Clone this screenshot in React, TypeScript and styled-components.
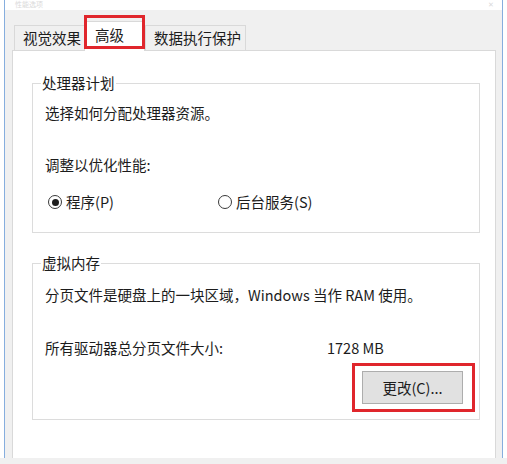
import React from "react";
import styled, { createGlobalStyle } from "styled-components";

const GlobalStyle = createGlobalStyle`
  html, body { margin: 0; padding: 0; background: #ffffff; }
  body {
    font-family: "Noto Sans CJK SC", "Microsoft YaHei", "Liberation Sans", sans-serif;
    color: #1c1c1c;
  }
  #root { width: 507px; height: 464px; overflow: hidden; }
`;

const Screen = styled.div`
  width: 507px;
  height: 464px;
  display: flex;
  flex-direction: column;
  background: #ffffff;
`;

const Window = styled.div`
  flex: 0 0 458px;
  margin: 0 4px;
  border-left: 1px solid #86aede;
  border-right: 1px solid #86aede;
  background: #f0f0f0;
  display: flex;
  flex-direction: column;
`;

const BottomStrip = styled.div`
  flex: 1;
  background: #f0f0f0;
`;

const TitleBar = styled.div`
  flex: 0 0 10px;
  background: #ffffff;
  display: flex;
  align-items: flex-start;
  justify-content: space-between;
  padding: 0 8px 0 10px;
  font-size: 7px;
  line-height: 8px;
  color: #dadada;
`;

const Body = styled.div`
  flex: 1;
  display: flex;
  flex-direction: column;
  padding: 0 6px 0 7px;
`;

const TabRow = styled.div`
  flex: 0 0 40px;
  display: flex;
  align-items: flex-end;
  padding-left: 2px;
  font-size: 14.5px;
`;

const Tab = styled.div<{ $active?: boolean; $width: number; $pad: number }>`
  position: relative;
  box-sizing: border-box;
  width: ${(p) => p.$width}px;
  height: ${(p) => (p.$active ? 30 : 25)}px;
  margin-bottom: ${(p) => (p.$active ? -1 : 0)}px;
  margin-left: ${(p) => (p.$active ? -1 : 0)}px;
  padding: 0 0 ${(p) => (p.$active ? 4 : 0)}px ${(p) => p.$pad}px;
  display: flex;
  align-items: center;
  border: 1px solid #d9d9d9;
  border-bottom: none;
  background: ${(p) => (p.$active ? "#ffffff" : "#f0f0f0")};
  z-index: ${(p) => (p.$active ? 2 : 1)};
  white-space: nowrap;
  line-height: 18px;

  ${(p) =>
    p.$active &&
    `
    &::after {
      content: "";
      position: absolute;
      top: -7px;
      left: -1px;
      right: -1px;
      bottom: 2px;
      border: 3px solid #e0262c;
      pointer-events: none;
    }
  `}
`;

const TabPage = styled.div`
  flex: 1;
  background: #ffffff;
  border: 1px solid #d9d9d9;
  border-bottom: none;
  padding: 23px 15px 0 19px;
  font-size: 14.5px;
  line-height: 20px;
`;

const Group = styled.fieldset<{ $gap?: number }>`
  margin: ${(p) => p.$gap ?? 0}px 0 0 0;
  border: 1px solid #dcdcdc;
  padding: 0 16px ${(p) => (p.$gap ? 15 : 20)}px 12px;
  min-width: 0;
`;

const Legend = styled.legend`
  margin-left: -4px;
  padding: 0 1px;
  line-height: 18px;
  font-size: 14.5px;
`;

const Line = styled.div<{ $top: number }>`
  margin-top: ${(p) => p.$top}px;
  white-space: nowrap;
`;

const RadioRow = styled.div`
  margin-top: 17px;
  padding-left: 3px;
  display: flex;
  align-items: center;
`;

const RadioItem = styled.label<{ $width?: number }>`
  display: flex;
  align-items: center;
  gap: 4px;
  width: ${(p) => (p.$width ? `${p.$width}px` : "auto")};
`;

const RadioCircle = styled.span<{ $checked?: boolean }>`
  box-sizing: border-box;
  width: 14px;
  height: 14px;
  border-radius: 50%;
  border: 1px solid #3a3a3a;
  display: flex;
  align-items: center;
  justify-content: center;
  background: #ffffff;

  &::after {
    content: "";
    width: 7px;
    height: 7px;
    border-radius: 50%;
    background: ${(p) => (p.$checked ? "#1e1e1e" : "transparent")};
  }
`;

const InfoRow = styled.div`
  margin-top: 33px;
  display: grid;
  grid-template-columns: 282px auto;
  white-space: nowrap;
`;

const ButtonRow = styled.div`
  margin-top: 13px;
  display: flex;
  justify-content: flex-end;
`;

const Highlight = styled.div`
  position: relative;

  &::after {
    content: "";
    position: absolute;
    top: -8px;
    left: -10px;
    right: -12px;
    bottom: -8px;
    border: 3px solid #e0262c;
    pointer-events: none;
  }
`;

const Button = styled.button`
  box-sizing: border-box;
  width: 101px;
  height: 33px;
  background: #e1e1e1;
  border: 1px solid #adadad;
  font-family: inherit;
  font-size: 14.5px;
  color: #1c1c1c;
  padding: 0;
  display: flex;
  align-items: center;
  justify-content: center;
`;

export default function App() {
  return (
    <>
      <GlobalStyle />
      <Screen>
        <Window>
          <TitleBar>
            <span>性能选项</span>
            <span>✕</span>
          </TitleBar>
          <Body>
            <TabRow>
              <Tab $width={71} $pad={8}>视觉效果</Tab>
              <Tab $active $width={61} $pad={10}>高级</Tab>
              <Tab $width={101} $pad={8}>数据执行保护</Tab>
            </TabRow>
            <TabPage>
              <Group>
                <Legend>处理器计划</Legend>
                <Line $top={11}>选择如何分配处理器资源。</Line>
                <Line $top={32}>调整以优化性能:</Line>
                <RadioRow>
                  <RadioItem $width={170}>
                    <RadioCircle $checked />
                    程序(P)
                  </RadioItem>
                  <RadioItem>
                    <RadioCircle />
                    后台服务(S)
                  </RadioItem>
                </RadioRow>
              </Group>
              <Group $gap={21}>
                <Legend>虚拟内存</Legend>
                <Line $top={13}>分页文件是硬盘上的一块区域，Windows 当作 RAM 使用。</Line>
                <InfoRow>
                  <span>所有驱动器总分页文件大小:</span>
                  <span>1728 MB</span>
                </InfoRow>
                <ButtonRow>
                  <Highlight>
                    <Button>更改(C)...</Button>
                  </Highlight>
                </ButtonRow>
              </Group>
            </TabPage>
          </Body>
        </Window>
        <BottomStrip />
      </Screen>
    </>
  );
}
